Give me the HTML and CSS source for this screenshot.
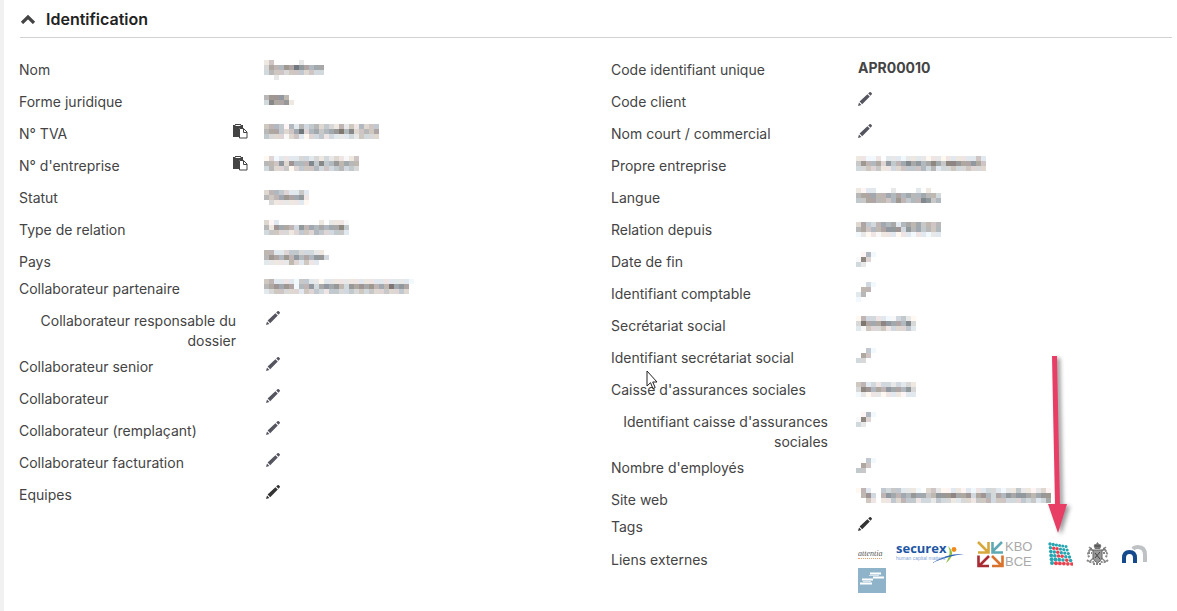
FILE: index.html
```html
<!DOCTYPE html>
<html lang="fr">
<head>
  <meta charset="UTF-8">
  <meta name="viewport" content="width=device-width, initial-scale=1.0">
  <title>Identification</title>
  <link rel="stylesheet" href="styles.css">
</head>
<body>
  <svg class="symbols" aria-hidden="true">
    <symbol id="pencil" viewBox="0 0 14 14">
      <path d="M0 14l1-3.400 2.400 2.400zM1.600 9.600L9.400 2.200l2.400 2.400L4.200 12.200zM10.200 1.400L11.500.200q.700-.500 1.300.100l1 1q.400.500 0 1l-1.300 1.400z" fill="currentColor"/>
    </symbol>
    <symbol id="copy" viewBox="0 0 15 15">
      <path d="M0 1h2V0h6v1h2v3H6v9H0z" fill="currentColor"/>
      <path d="M2.500 1.500h5" stroke="#fff"/>
      <path d="M6.500 4.500h4l3.500 3.500v6H6.500z" fill="#fff" stroke="currentColor"/>
      <path d="M10.500 4.500v4h3.500" fill="none" stroke="currentColor"/>
    </symbol>
  </svg>

  <main class="panel">
    <h2 class="panel-title">
      <button class="toggle" type="button" aria-expanded="true">
        <svg width="16" height="10" viewBox="0 0 16 10"><path d="M2 9l6-6L14 9" fill="none" stroke="#444" stroke-width="3.200"/></svg>
        Identification
      </button>
    </h2>

    <div class="columns">
      <dl class="fields">
        <div class="field"><dt><span>Nom</span></dt><dd class="masked" data-cells="ec.....e....|dabb9a79abaa|dbccdcccdcdd|..e........."></dd></div>
        <div class="field"><dt><span>Forme juridique</span></dt><dd class="masked masked-up" data-cells="......|b999b.|d8aa9e"></dd></div>
        <div class="field"><dt><span>N° TVA</span><button class="copy" type="button" aria-label="Copier"><svg width="15" height="15"><use href="#copy"/></svg></button></dt><dd class="masked" data-cells="cbbcfbebdcbdcdebecebdcc|baacdca7dbacba97b8dcbca|cdddfdcefddcedeeedecddd"></dd></div>
        <div class="field"><dt><span>N° d'entreprise</span><button class="copy" type="button" aria-label="Copier"><svg width="15" height="15"><use href="#copy"/></svg></button></dt><dd class="masked" data-cells="fdfeeeeddedededefec|bbc9d9bbb8c8cb9babb|dbddcfdcccbdcdcbdcd"></dd></div>
        <div class="field"><dt><span>Statut</span></dt><dd class="masked masked-down" data-cells="dbbcdeece|bcba9aa9e|.deeeeeef"></dd></div>
        <div class="field"><dt><span>Type de relation</span></dt><dd class="masked" data-cells="dfe........e.eeef|be9aabd9bababaa8c|dccddedccdbcddcce"></dd></div>
        <div class="field field-tight"><dt><span>Pays</span></dt><dd class="masked masked-up" data-cells="bbeedccdddee.|b9ab9b9bab99d|eeeeebdecee.."></dd></div>
        <div class="field field-tight"><dt><span>Collaborateur partenaire</span></dt><dd class="masked" data-cells="cbeeeefcceefeeeeeeeeeeeeeeeeef|ba9a9afbb9da9a9bd9a9a9bab7a9a.|edccdddecdcdeccddcdcdcddcddcd."></dd></div>
        <div class="field field-wrapped"><dt><span>Collaborateur responsable du dossier</span></dt><dd><button class="edit" type="button" aria-label="Modifier"><svg width="14" height="14"><use href="#pencil"/></svg></button></dd></div>
        <div class="field"><dt><span>Collaborateur senior</span></dt><dd><button class="edit" type="button" aria-label="Modifier"><svg width="14" height="14"><use href="#pencil"/></svg></button></dd></div>
        <div class="field"><dt><span>Collaborateur</span></dt><dd><button class="edit" type="button" aria-label="Modifier"><svg width="14" height="14"><use href="#pencil"/></svg></button></dd></div>
        <div class="field"><dt><span>Collaborateur (remplaçant)</span></dt><dd><button class="edit" type="button" aria-label="Modifier"><svg width="14" height="14"><use href="#pencil"/></svg></button></dd></div>
        <div class="field"><dt><span>Collaborateur facturation</span></dt><dd><button class="edit" type="button" aria-label="Modifier"><svg width="14" height="14"><use href="#pencil"/></svg></button></dd></div>
        <div class="field"><dt><span>Equipes</span></dt><dd><button class="edit edit-dark" type="button" aria-label="Modifier"><svg width="14" height="14"><use href="#pencil"/></svg></button></dd></div>
      </dl>

      <dl class="fields">
        <div class="field"><dt><span>Code identifiant unique</span></dt><dd class="code">APR00010</dd></div>
        <div class="field"><dt><span>Code client</span></dt><dd><button class="edit" type="button" aria-label="Modifier"><svg width="14" height="14"><use href="#pencil"/></svg></button></dd></div>
        <div class="field"><dt><span>Nom court / commercial</span></dt><dd><button class="edit" type="button" aria-label="Modifier"><svg width="14" height="14"><use href="#pencil"/></svg></button></dd></div>
        <div class="field"><dt><span>Propre entreprise</span></dt><dd class="masked" data-cells="eeffe.eeefeeeefeefeeeeeece|c9bbad9cba8a9ba8ac889aa9ac|ddcdceeddccccbdbeddcddcddd"></dd></div>
        <div class="field"><dt><span>Langue</span></dt><dd class="masked" data-cells="efee...e....e.e..|baaabbabababbabbd|ccaabbcb9bcbb89cb"></dd></div>
        <div class="field"><dt><span>Relation depuis</span></dt><dd class="masked masked-down" data-cells="dacdbabaebabacbcb|bacbba999d9bacbcb|fefefeeefeefeefeee"></dd></div>
        <div class="field"><dt><span>Date de fin</span></dt><dd class="masked" data-cells=".fbf|f8d.|de.."></dd></div>
        <div class="field"><dt><span>Identifiant comptable</span></dt><dd class="masked masked-up" data-cells="..df|.bb.|eb..|f..."></dd></div>
        <div class="field"><dt><span>Secrétariat social</span></dt><dd class="masked" data-cells="fbddeeffdcef|d7aaa89aab8d|efcddcedddce"></dd></div>
        <div class="field"><dt><span>Identifiant secrétariat social</span></dt><dd class="masked" data-cells="..cf|.ac.|dd.."></dd></div>
        <div class="field">
          <dt><span>Caisse d'assurances sociales</span></dt><dd class="masked masked-down" data-cells="cbededdedede|d89bab9aab9d|fefeefeeefee"></dd>
          <svg class="cursor" width="12" height="20" viewBox="0 0 12 20"><path d="M1 1v15l3.500-3.300 2.400 5.800 2.300-1-2.500-5.500H11z" fill="#fff" stroke="#222"/></svg>
        </div>
        <div class="field field-wrapped"><dt><span>Identifiant caisse d'assurances sociales</span></dt><dd class="masked" data-cells=".fbf|f8d.|de.."></dd></div>
        <div class="field"><dt><span>Nombre d'employés</span></dt><dd class="masked" data-cells="..cf|.ac.|cc.."></dd></div>
        <div class="field field-tight"><dt><span>Site web</span></dt><dd class="masked masked-up" data-cells="fbe..cdcceeef.dceffeefefeeddefeeceefedf|.b9d.b9abab9aacb9998aa9da9bdab9a99aba99|..ce.eecdbcceddecddeeddeccbdccdddcdceda"></dd></div>
        <div class="field field-tags"><dt><span>Tags</span></dt><dd><button class="edit edit-dark" type="button" aria-label="Modifier"><svg width="14" height="14"><use href="#pencil"/></svg></button></dd></div>
        <div class="field">
          <dt><span>Liens externes</span></dt>
          <dd class="links">
            <a class="link link-attentia" href="#" aria-label="attentia"><span>attentia</span></a>
            <a class="link" href="#" aria-label="securex">
              <svg width="68" height="26" viewBox="0 0 68 26">
                <path d="M52 5Q61 13 50 22Q56 12 52 5z" fill="#8cbf3f"/>
                <path d="M36 22Q51 12 68 13Q52 15 36 22z" fill="#2a62b5"/>
                <circle cx="58" cy="8.500" r="2.400" fill="#f08a1d"/>
                <text class="securex" x="0" y="12">securex</text>
                <text class="securex-sub" x="0" y="19">human capital matters</text>
              </svg>
            </a>
            <a class="link" href="#" aria-label="KBO BCE">
              <svg width="58" height="28" viewBox="0 0 58 28">
                <g fill="none" stroke-width="2.600">
                  <path d="M1 2l10 10M11.500 2v10.500H1" stroke="#d7a93c"/>
                  <path d="M25 2L15 12M15.500 2v10.500H26" stroke="#5fa9b5"/>
                  <path d="M12 16L2 26M1.500 15.500V26H12" stroke="#a92c35"/>
                  <path d="M15 16l10 10M25.500 15.500V26H15" stroke="#d9722c"/>
                </g>
                <text class="kbo" x="28" y="11">KBO</text>
                <text class="kbo" x="28" y="26">BCE</text>
              </svg>
            </a>
            <a class="link link-target" href="#" aria-label="Companyweb">
              <svg class="dots" width="25" height="24" viewBox="0 0 25 24"></svg>
              <svg class="arrow" width="24" height="184" viewBox="0 0 24 184"><path d="M5 3h5l3 148h7l-9 29-10-29h7z" fill="#e83e66"/></svg>
            </a>
            <a class="link" href="#" aria-label="Moniteur belge">
              <svg width="23" height="24" viewBox="0 0 23 24">
                <g fill="none" stroke="#888">
                  <path d="M3 5l17 15M20 5L3 20" stroke-width="1.500"/>
                  <path d="M4 8q-4 4 0 8M19 8q4 4 0 8M2 11h4M17 11h4M1 18q4 4 8 1M22 18q-4 4-8 1M7 22h9" stroke-width="2" stroke-dasharray="2 1"/>
                </g>
                <path d="M8 5q-1-3 2-3l1.500-2L13 2q3 0 2 3l-1 2H9z" fill="#777"/>
                <path d="M7 8h9v8q-1 3-4.500 5Q8 19 7 16z" fill="#999" stroke="#666"/>
                <path d="M9 11l5 6M14 10l-5 6M9 4h5" stroke="#444"/>
                <path d="M3 8l2-3 2 4zM20 8l-2-3-2 4z" fill="#777"/>
              </svg>
            </a>
            <a class="link" href="#" aria-label="Notaire">
              <svg width="26" height="18" viewBox="0 0 26 18">
                <path d="M11 4Q12.500 2 16 2q7 0 7 8v7" fill="none" stroke="#bfc2c5" stroke-width="4"/>
                <path d="M2 18v-5q0-6 5.500-6t5.500 6v5" fill="none" stroke="#14498c" stroke-width="4"/>
              </svg>
            </a>
            <a class="link" href="#" aria-label="Staatsblad">
              <svg width="28" height="25" viewBox="0 0 28 25">
                <path d="M0 0h28v25H0z" fill="#8fb4ca"/>
                <path d="M12 5.500h11M15 9.500h11M4 11.500h11M2 15.500h12" stroke="#fff" stroke-width="2"/>
                <path d="M11 7.500h10M5 13.500h8" stroke="#d5e3eb"/>
              </svg>
            </a>
          </dd>
        </div>
      </dl>
    </div>
  </main>

  <script>
    const SVG = 'http://www.w3.org/2000/svg';

    function add(svg, type, attrs) {
      const el = document.createElementNS(SVG, type);
      Object.keys(attrs).forEach(k => el.setAttribute(k, attrs[k]));
      svg.appendChild(el);
    }

    // one hex digit = grey level of a 5px cell, with a light warm/cool tint
    const tints = [[6, 0, -7], [-7, 0, 7], [0, 0, 0], [6, -3, -4], [-6, 1, 4]];
    document.querySelectorAll('.masked').forEach(dd => {
      const rows = dd.dataset.cells.split('|');
      const svg = document.createElementNS(SVG, 'svg');
      svg.setAttribute('width', rows[0].length * 5);
      svg.setAttribute('height', rows.length * 5);
      rows.forEach((row, y) => {
        [...row].forEach((c, x) => {
          if (c === '.') return;
          const level = parseInt(c, 16) * 16 + 8;
          const tint = tints[(x * 3 + y * 2 + (x >> 2)) % tints.length];
          add(svg, 'rect', { x: x * 5, y: y * 5, width: 5, height: 5, fill: `rgb(${tint.map(t => level + t)})` });
        });
      });
      dd.appendChild(svg);
    });

    // leaning grid of dots, r = red, t = teal
    const dots = document.querySelector('.dots');
    ['tttttt', 'trrttt', 'ttrttt', 'ttrrtt', 'ttttrt', 'trrrrr'].forEach((row, y) => {
      [...row].forEach((c, x) => {
        add(dots, 'circle', {
          cx: 2 + y * 0.400 + x * (3.200 + y * 0.150),
          cy: 2 + y * 3.800 + x * (0.500 - y * 0.060),
          r: 1.700 + y * 0.060 - x * 0.040,
          fill: c === 'r' ? '#e8434f' : '#27a5b0'
        });
      });
    });
  </script>
</body>
</html>
```
FILE: styles.css
```css
* {
  box-sizing: border-box;
}
body {
  margin: 0;
  background-color: #f1f1f1;
  font-family: Inter, "Liberation Sans", sans-serif;
  font-size: 14px;
  line-height: 20px;
  color: #444;
}
.symbols {
  position: absolute;
  width: 0;
  height: 0;
}
svg {
  display: block;
}
button {
  margin: 0;
  padding: 0;
  border: none;
  background: none;
  color: inherit;
  font: inherit;
  cursor: pointer;
}
.panel {
  min-height: 100vh;
  margin-left: 4px;
  padding: 0 5px 0 15px;
  background-color: #fff;
}
.panel-title {
  margin: 0 0 22px 1px;
  padding: 9px 0 8px;
  border-bottom: 1px solid #d2d2d2;
  font-size: 16px;
  font-weight: 600;
  color: #222;
}
.toggle {
  display: flex;
  align-items: center;
  gap: 10px;
}
.columns {
  display: grid;
  grid-template-columns: 1fr 1fr;
  gap: 31px;
}
.fields {
  margin: 0;
}
.field {
  position: relative;
  display: flex;
  gap: 16px;
  padding-bottom: 12px;
}
.field-tight {
  padding-bottom: 7px;
}
.field:has(+ .field-wrapped) {
  padding-bottom: 12px;
}
.field-wrapped {
  padding-bottom: 6px;
}
.field-tags {
  padding-bottom: 13px;
}
.field dt {
  flex: none;
  display: flex;
  justify-content: space-between;
  width: 229px;
  padding-right: 12px;
}
.field dt:has(.copy) {
  padding-right: 0;
}
.field-wrapped dt {
  text-align: right;
}
.field dd {
  flex: 1;
  min-width: 0;
  height: 20px;
  margin: 0;
}
.copy {
  height: 15px;
}
.edit {
  display: block;
  margin-left: 2px;
  color: #555560;
}
.edit-dark {
  color: #333;
}
.code {
  padding-left: 2px;
  line-height: 16px;
  font-weight: 700;
}
.masked svg {
  shape-rendering: crispEdges;
}
.field .masked-up {
  margin-top: -2px;
}
.field .masked-down {
  margin-top: 2px;
  height: 18px;
}
.field .links {
  display: flex;
  flex-wrap: wrap;
  gap: 0 13px;
  height: auto;
  margin-top: -9px;
  padding-left: 2px;
}
.link {
  position: relative;
  display: flex;
  align-items: center;
  height: 26px;
  text-decoration: none;
}
.link-attentia {
  width: 25px;
  font-family: "Liberation Serif", serif;
  font-size: 8px;
  font-style: italic;
  line-height: 8px;
  color: #555;
}
.link-attentia span {
  border-bottom: 1px dotted #e9a070;
}
.securex {
  font: 700 13px "Open Sans", sans-serif;
  fill: #1d56a5;
}
.securex-sub {
  font: 5px "Liberation Sans", sans-serif;
  fill: #83a4d4;
}
.kbo {
  font: 13px "Liberation Sans", sans-serif;
  fill: #aaa;
}
.arrow {
  position: absolute;
  left: -1px;
  bottom: 30px;
  filter: drop-shadow(3px 2px 2px rgba(0, 0, 0, 0.4));
  pointer-events: none;
}
.cursor {
  position: absolute;
  top: -10px;
  left: 35px;
}
```
